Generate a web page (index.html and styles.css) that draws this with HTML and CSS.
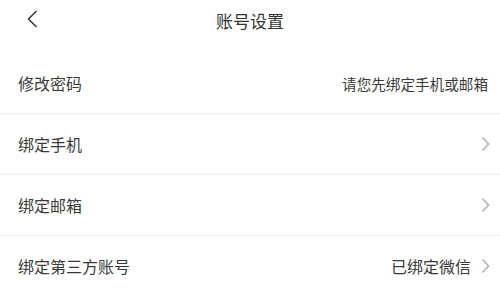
FILE: index.html
```html
<!DOCTYPE html>
<html lang="zh-CN">
<head>
  <meta charset="UTF-8" />
  <meta name="viewport" content="width=device-width, initial-scale=1" />
  <title>账号设置</title>
  <link rel="stylesheet" href="styles.css">
</head>
<body>

<header class="nav-bar">
  <span class="back">
    <svg width="12" height="18" viewBox="0 0 12 18"><path d="M10.5 1 L2.5 9 L10.5 17" fill="none" stroke="#333" stroke-width="1.5"/></svg>
  </span>
  <h1>账号设置</h1>
</header>

<ul class="setting-list">
  <li class="setting-item">
    <span class="label">修改密码</span>
    <span class="value small">请您先绑定手机或邮箱</span>
  </li>
  <li class="setting-item">
    <span class="label">绑定手机</span>
    <span class="arrow"><svg width="9" height="16" viewBox="0 0 9 16"><path d="M1.5 1.5 L7.5 8 L1.5 14.5" fill="none" stroke="#b3b3b3" stroke-width="1.7"/></svg></span>
  </li>
  <li class="setting-item">
    <span class="label">绑定邮箱</span>
    <span class="arrow"><svg width="9" height="16" viewBox="0 0 9 16"><path d="M1.5 1.5 L7.5 8 L1.5 14.5" fill="none" stroke="#b3b3b3" stroke-width="1.7"/></svg></span>
  </li>
  <li class="setting-item">
    <span class="label">绑定第三方账号</span>
    <span class="value">已绑定微信</span>
    <span class="arrow"><svg width="9" height="16" viewBox="0 0 9 16"><path d="M1.5 1.5 L7.5 8 L1.5 14.5" fill="none" stroke="#b3b3b3" stroke-width="1.7"/></svg></span>
  </li>
</ul>

</body>
</html>
```

FILE: styles.css
```css
body {
  margin: 0;
  background: #fff;
  color: #3a3a3a;
  font-family: "Noto Sans CJK SC", "Noto Sans", sans-serif;
}
.nav-bar {
  position: relative;
  height: 40px;
  display: flex;
  align-items: center;
  justify-content: center;
}
.nav-bar h1 {
  margin: 0;
  font-size: 17px;
  font-weight: 400;
  color: #333;
}
.back {
  position: absolute;
  left: 26px;
  top: 10px;
  display: flex;
}
.setting-list {
  list-style: none;
  margin: 13px 0 0;
  padding: 0;
}
.setting-item {
  display: flex;
  align-items: center;
  height: 60px;
  padding: 0 10px 0 18px;
  border-bottom: 1px solid #efefef;
  font-size: 16px;
}
.label {
  flex: 1;
}
.value {
  color: #3a3a3a;
}
.value.small {
  font-size: 14.6px;
  margin-right: 2px;
}
.arrow {
  display: flex;
  margin-left: 10px;
}
```
